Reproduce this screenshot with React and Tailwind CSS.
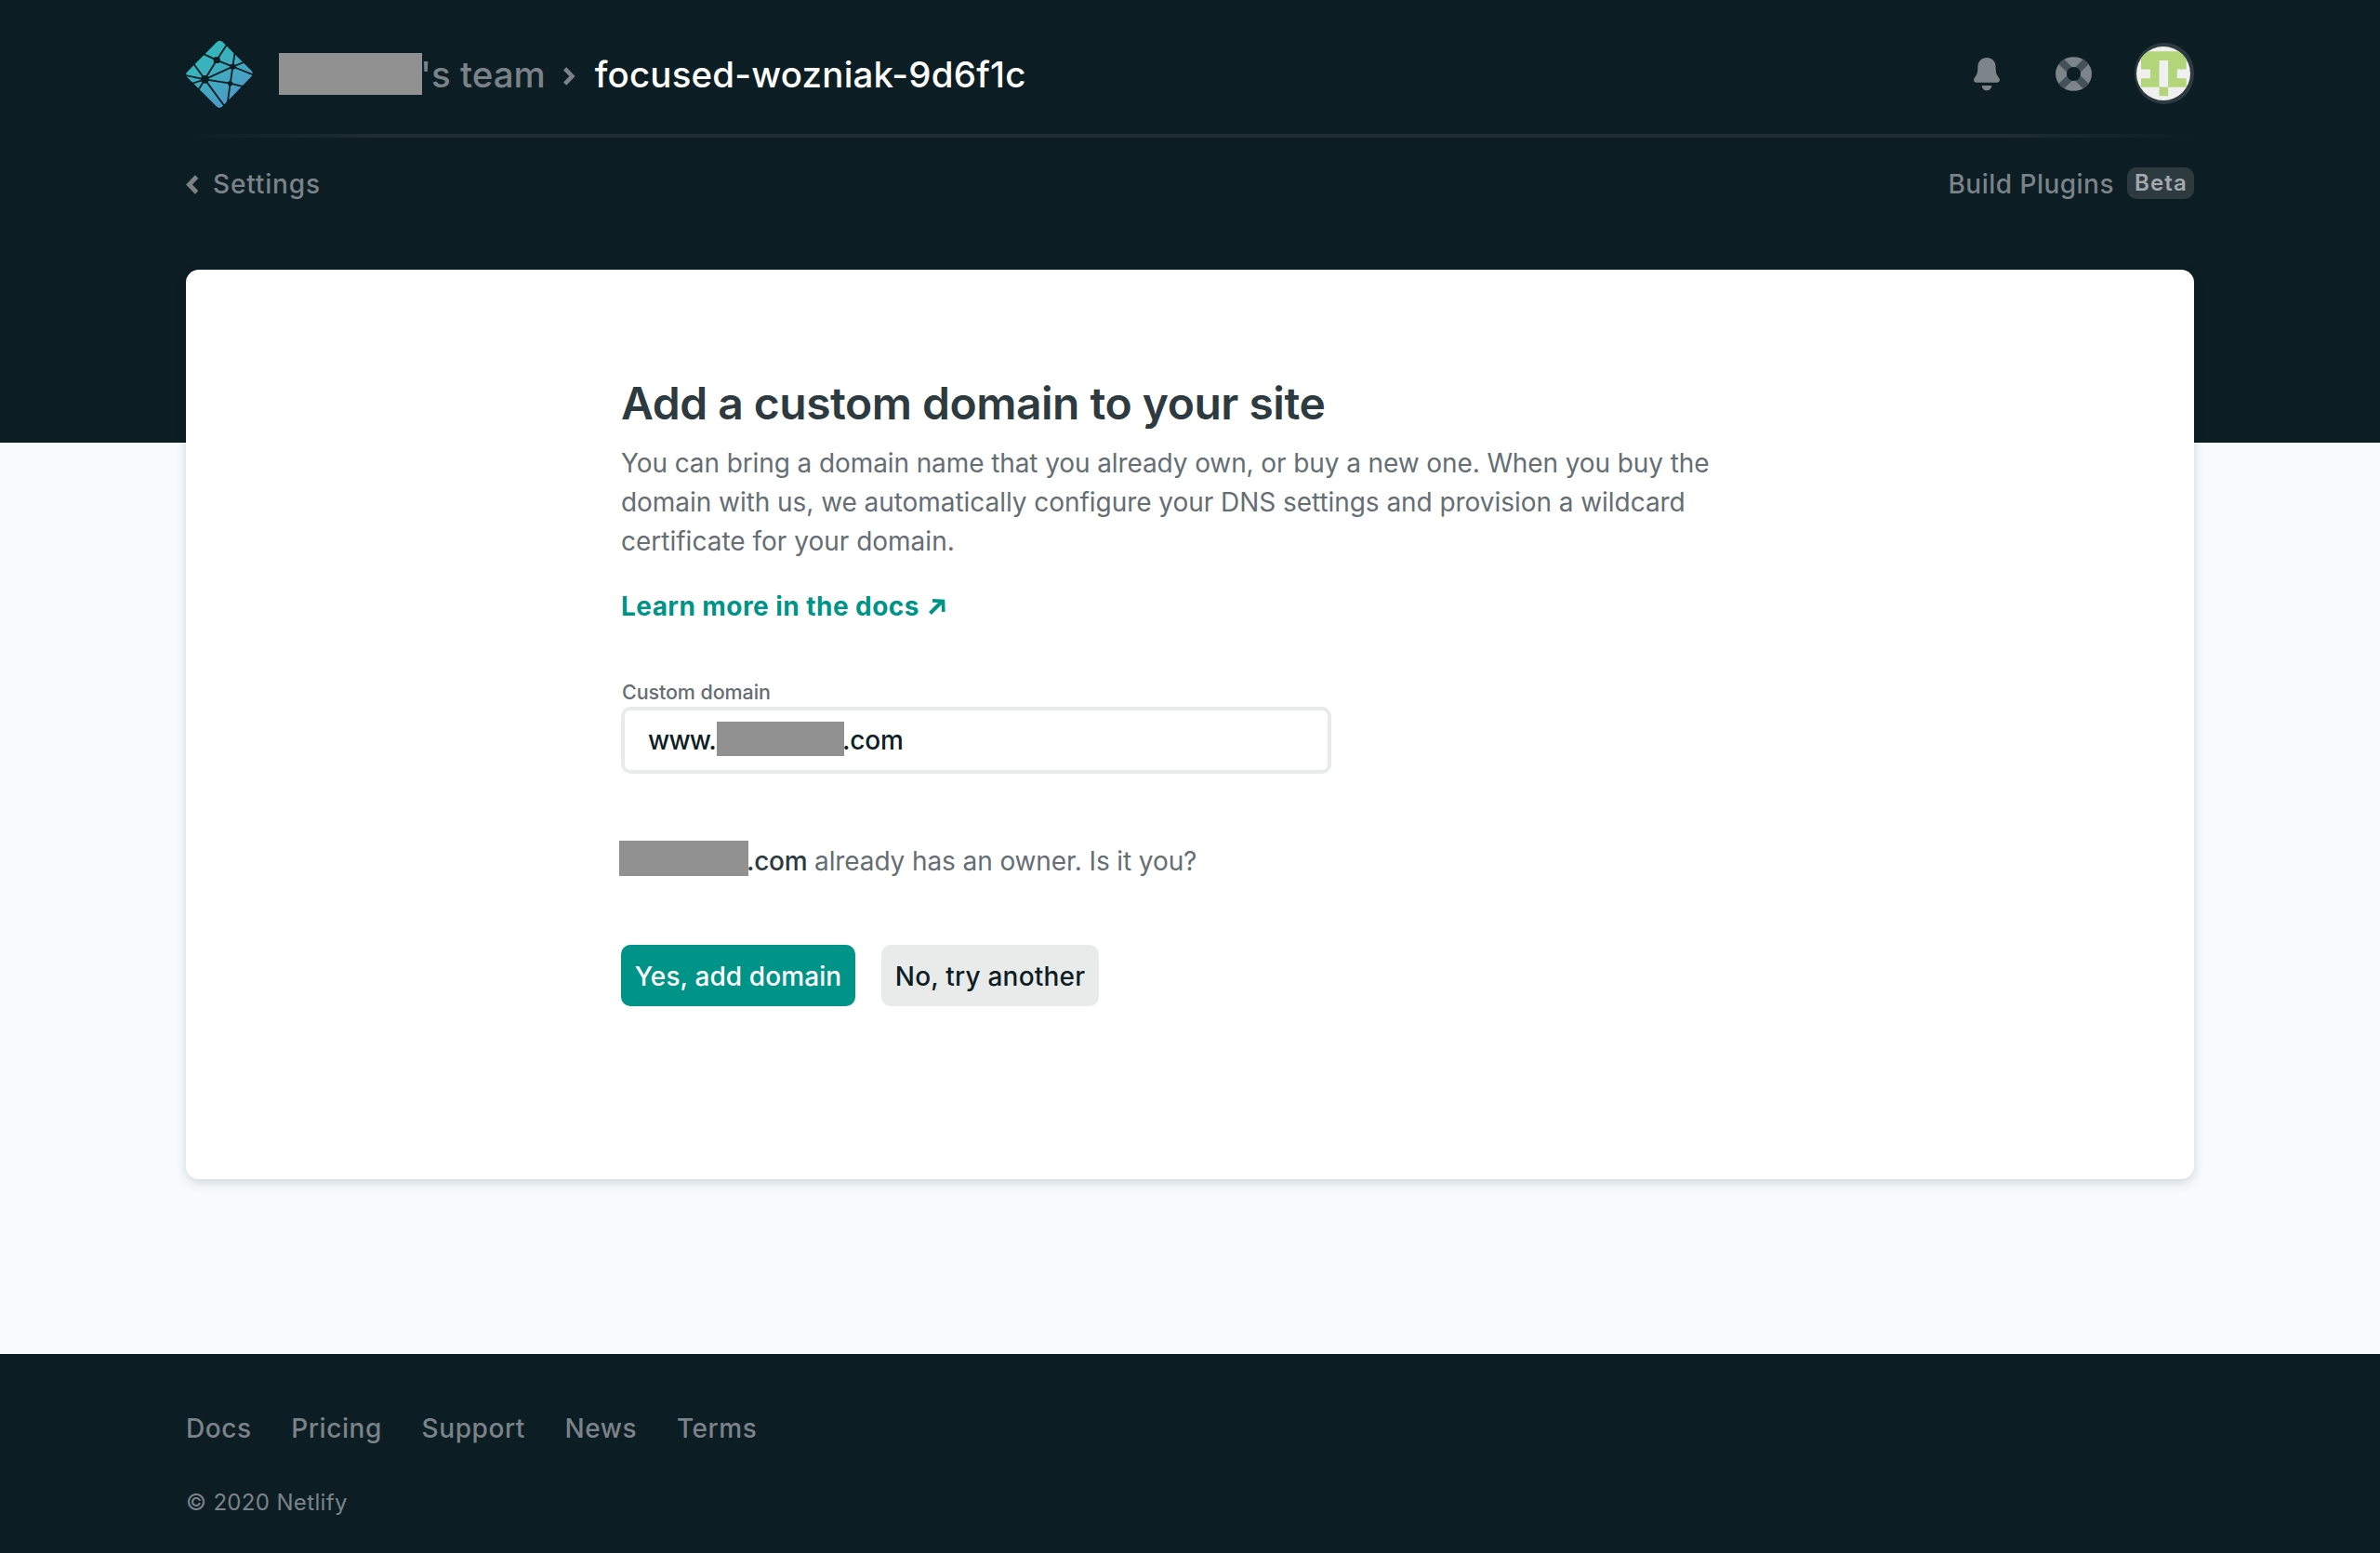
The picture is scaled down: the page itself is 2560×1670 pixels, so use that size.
import React from 'react';

function Logo() {
  return (
    <svg viewBox="24 24 216 216" className="h-[72px] w-[72px]">
      <defs>
        <linearGradient id="logo-fill" x1="0.2" y1="0.1" x2="0.75" y2="0.85">
          <stop offset="0.1" stopColor="#33b9bb" />
          <stop offset="1" stopColor="#4e9ac6" />
        </linearGradient>
      </defs>
      <path
        d="M122 29Q132 19 143 28L236 121Q243 130 236 138L142 235Q132 245 122 235L28 141Q20 131 29 123Z"
        fill="url(#logo-fill)"
      />
      <g stroke="#0c1e24" strokeWidth="5.5" fill="none">
        <path d="M123 86L160 30M123 86L72 62M123 86L175 107M123 86L85 148" />
        <path d="M175 107L182 60M175 107L218 90M175 107L245 135M175 107L85 148M175 107L167 161" />
        <path d="M85 148L46 94M85 148L18 134M85 148L42 162M85 148L62 186M85 148L167 161M85 148L154 242" />
        <path d="M167 161L216 173M167 161L156 240" />
      </g>
      <g fill="#0c1e24">
        <rect x="113" y="76" width="21" height="20" rx="6" />
        <circle cx="175" cy="107" r="9" />
        <circle cx="85" cy="148" r="13" />
        <circle cx="167" cy="161" r="8" />
      </g>
    </svg>
  );
}

function BellIcon() {
  return (
    <svg viewBox="0 0 28 36" className="-mt-px h-9 w-7" fill="#7d858b">
      <path d="M14 0C19.5 0 23.6 4.2 23.6 9.6C23.6 16.5 24.4 18 27 21.6C28.9 24.3 27.8 26.7 24.8 26.7H3.2C.2 26.7-.9 24.3 1 21.6C3.6 18 4.4 16.5 4.4 9.6C4.4 4.2 8.5 0 14 0Z" />
      <path d="M8.8 30H19.2C19.2 33.2 17 35.3 14 35.3S8.8 33.2 8.8 30Z" />
    </svg>
  );
}

function HelpIcon() {
  return (
    <svg viewBox="0 0 39 37" className="-mt-[2px] h-[37px] w-[39px]">
      <defs>
        <clipPath id="help-clip">
          <ellipse cx="19.5" cy="18.5" rx="19.5" ry="18.3" />
        </clipPath>
      </defs>
      <g clipPath="url(#help-clip)">
        <rect width="39" height="37" fill="#7d858b" />
        <path d="M4.5 3.5L34.5 33.5M34.5 3.5L4.5 33.5" stroke="#455158" strokeWidth="8" />
      </g>
      <circle cx="19.5" cy="18.5" r="7.5" fill="#0c1e24" />
    </svg>
  );
}

function Avatar() {
  return (
    <div className="-mt-[2px] h-[66px] w-16 rounded-full bg-[#2d3b41] pt-1 pl-[2px]">
      <svg viewBox="53 41 175 175" className="h-[58px] w-[58px] rounded-full bg-[#f0f0f0]">
        <path
          fill="#b2d579"
          d="M68 57H215V115H185V144H215V173H156V202H127V173H68V144H98V115H68ZM127 86V172H156V86Z"
          fillRule="evenodd"
        />
      </svg>
    </div>
  );
}

function Chevron({ left = false, className }) {
  return (
    <svg viewBox="0 0 14 21" className={className} fill="none" stroke="#7b8388" strokeWidth="4.8">
      <path d={left ? 'M11.6 2L3.4 10.5L11.6 19' : 'M2.4 2L10.6 10.5L2.4 19'} />
    </svg>
  );
}

function Header() {
  return (
    <header className="h-[476px] bg-[#0c1e24] text-[#7b8388]">
      <div className="mx-auto w-[2160px]">
        <div className="flex h-36 items-center pt-4 font-medium">
          <Logo />
          <div className="-mt-px ml-7 h-[45px] w-[154px] bg-[#919191]" />
          <div className="-ml-[2px] text-[38.5px] leading-[48px]">'s team</div>
          <Chevron className="mt-[3px] ml-[18px] h-5 w-[14px]" />
          <div className="ml-[21px] text-[38.5px] leading-[48px] tracking-[0.18px] text-white">
            focused-wozniak-9d6f1c
          </div>
          <div className="ml-auto flex items-center">
            <BellIcon />
            <div className="ml-[60px]">
              <HelpIcon />
            </div>
            <div className="ml-[46px]">
              <Avatar />
            </div>
          </div>
        </div>
        <div className="h-1 bg-[linear-gradient(to_right,transparent,#1f2e35_10%,#1f2e35_90%,transparent)]" />
        <div className="flex h-[100px] items-center text-[28px] leading-9 font-medium">
          <Chevron left className="h-[21px] w-[14px]" />
          <div className="ml-[15px] tracking-[0.85px]">Settings</div>
          <div className="ml-auto tracking-[0.48px]">Build Plugins</div>
          <div className="-mt-[2px] ml-[14px] h-[34px] w-[72px] rounded-[10px] bg-[#2d3b41] pl-px text-center text-[24px] leading-[34px] font-semibold tracking-[1.1px] text-[#a3a9ac]">
            Beta
          </div>
        </div>
      </div>
    </header>
  );
}

function DomainCard() {
  return (
    <section className="relative mx-auto -mt-[186px] h-[978px] w-[2160px] rounded-[14px] bg-white pt-[114px] pl-[468px] text-[28px] leading-[42px] text-[#646e73] shadow-[0_4px_12px_rgba(14,30,37,0.16)]">
      <h1 className="text-[48px] leading-[60px] font-semibold tracking-[-0.5px] text-[#2d3b41]">
        Add a custom domain to your site
      </h1>
      <p className="mt-[13px]">
        <span className="tracking-[-0.1px]">
          You can bring a domain name that you already own, or buy a new one. When you buy the
        </span>
        <br />
        <span className="tracking-[-0.05px]">
          domain with us, we automatically configure your DNS settings and provision a wildcard
        </span>
        <br />
        certificate for your domain.
      </p>
      <a className="mt-7 flex items-center font-bold tracking-[0.44px] text-[#009488]">
        Learn more in the docs
        <svg viewBox="0 0 18 17" className="ml-[10px] h-[17px] w-[18px]" fill="none" stroke="#009488">
          <path d="M1.5 15.5L14 3" strokeWidth="4" />
          <path d="M4 1.9L15.5 2.5L15.8 14" strokeWidth="3.6" />
        </svg>
      </a>
      <div className="mt-[55px] ml-px text-[21.5px] leading-8 font-medium tracking-[-0.1px]">Custom domain</div>
      <div className="flex h-[72px] w-[764px] items-center rounded-[10px] border-4 border-[#e9ebeb] pl-[25px] font-medium text-[#0e1e25]">
        <div className="w-[74px] tracking-[-0.8px]">www.</div>
        <div className="-mt-[3px] h-[37px] w-[137px] bg-[#919191]" />
        <div className="-ml-[2px] tracking-[-0.2px]">.com</div>
      </div>
      <div className="mt-[73px] flex h-[42px]">
        <div className="-mt-px -ml-[2px] h-[38px] w-[139px] bg-[#919191]" />
        <div className="-ml-[2px] tracking-[-0.1px]">
          <span className="font-medium tracking-[-0.3px] text-[#2d3b41]">.com</span> already has an owner. Is it you?
        </div>
      </div>
      <div className="mt-[69px] flex gap-7 text-center leading-[68px] font-medium">
        <button className="h-[66px] w-[252px] rounded-[10px] bg-[#009488] tracking-[0.1px] text-white">
          Yes, add domain
        </button>
        <button className="h-[66px] w-[234px] rounded-[10px] bg-[#e9ebeb] tracking-[0.2px] text-[#0e1e25]">
          No, try another
        </button>
      </div>
    </section>
  );
}

function Footer() {
  return (
    <footer className="mt-[188px] h-[214px] bg-[#0c1e24] pt-[62px] text-[#7b8388]">
      <div className="mx-auto w-[2160px]">
        <nav className="flex gap-[42.6px] text-[28px] leading-[36px] font-medium tracking-[0.58px]">
          {['Docs', 'Pricing', 'Support', 'News', 'Terms'].map((t) => (
            <a key={t}>{t}</a>
          ))}
        </nav>
        <p className="mt-[46px] text-[24px] leading-8 tracking-[0.35px]">© 2020 Netlify</p>
      </div>
    </footer>
  );
}

export default function App() {
  return (
    <div className="h-[1670px] w-[2560px] overflow-hidden bg-[#f7fbfc] font-['Inter',sans-serif]">
      <Header />
      <DomainCard />
      <Footer />
    </div>
  );
}
